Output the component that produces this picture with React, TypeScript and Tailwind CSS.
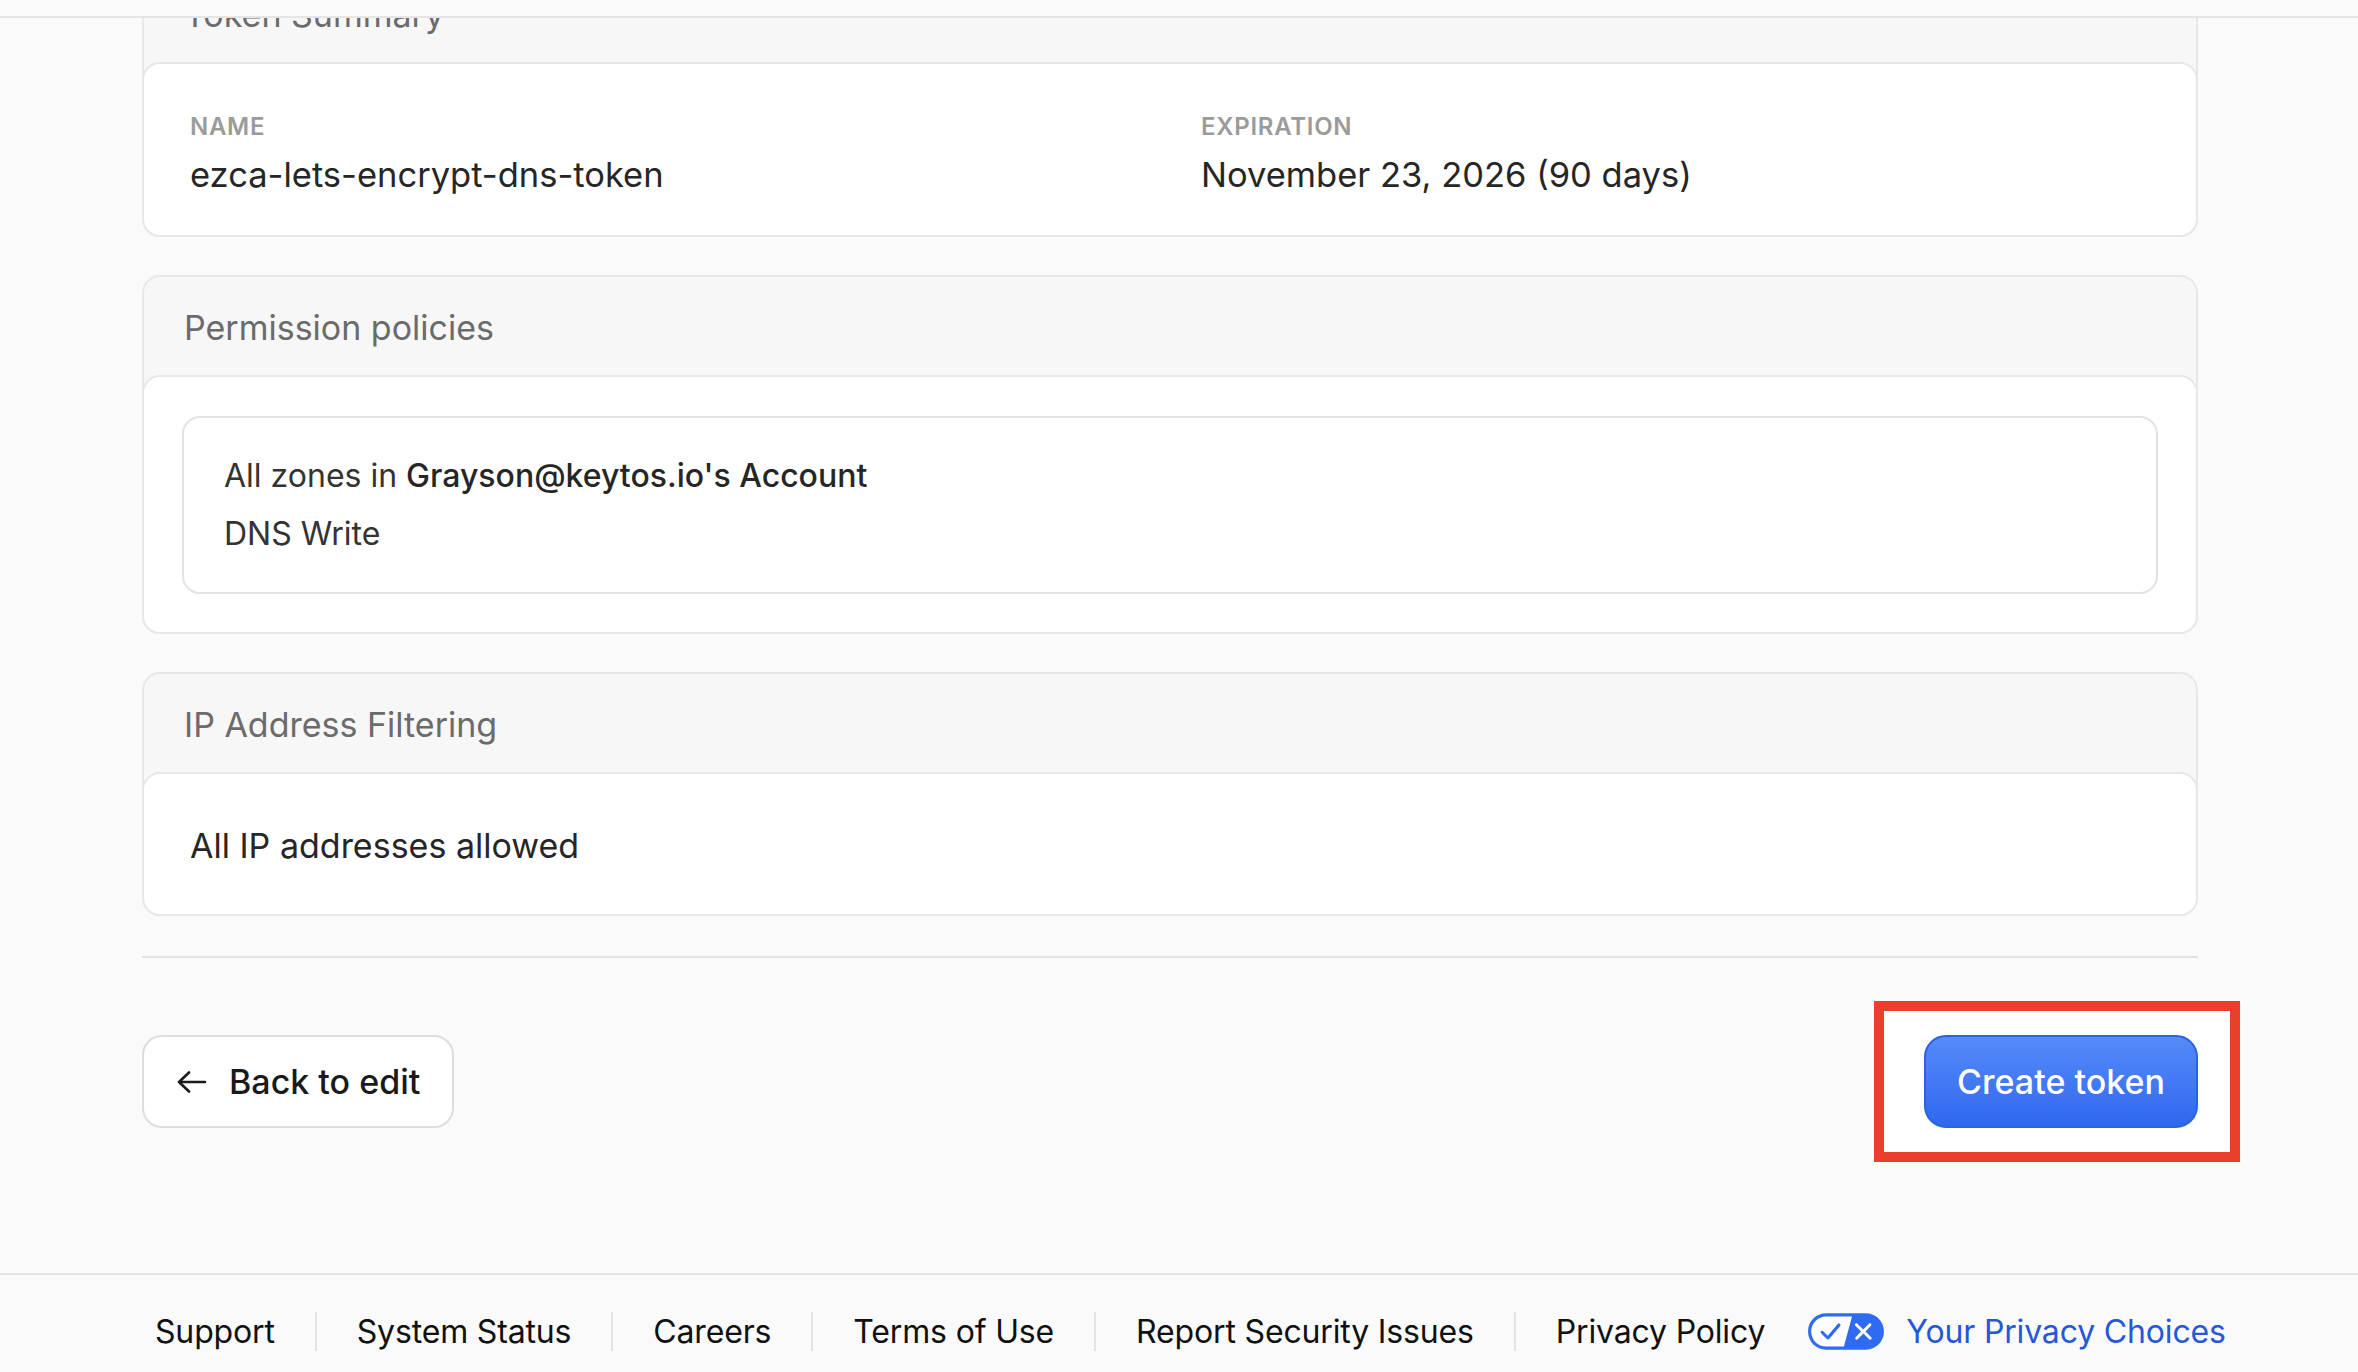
import React from "react";

// Card with a grey title strip and a white body laid over its lower part
function Section({ title, children }: { title: string; children: React.ReactNode }) {
  return (
    <section className="rounded-[18px] border-2 border-[#e8e8e8] bg-[#f7f7f7]">
      <div className="h-[98px] flex items-center pl-[40px] pt-[4px] text-[34px] leading-[44px] text-[#6b6b6b]">
        {title}
      </div>
      <div className="-mx-[2px] -mb-[2px] rounded-[18px] border-2 border-[#e8e8e8] bg-white">
        {children}
      </div>
    </section>
  );
}

function PrivacyIcon() {
  return (
    <svg width="78" height="37" viewBox="0 0 30 14" aria-hidden>
      <path
        fill="#fff"
        fillRule="evenodd"
        d="M7.4 12.8h6.8l3.1-11.6H7.4C4.2 1.2 1.6 3.8 1.6 7s2.6 5.8 5.8 5.8z"
      />
      <path
        fill="#2f6bf0"
        fillRule="evenodd"
        d="M22.6 0H7.4c-3.9 0-7 3.1-7 7s3.1 7 7 7h15.2c3.9 0 7-3.1 7-7s-3.2-7-7-7zm-21 7c0-3.2 2.6-5.8 5.8-5.8h9.9l-3.1 11.6H7.4c-3.2 0-5.8-2.6-5.8-5.8z"
      />
      <path
        fill="#fff"
        d="M24.6 4c.2.2.2.6 0 .8L22.5 7l2.2 2.2c.2.2.2.6 0 .8-.2.2-.6.2-.8 0l-2.2-2.2-2.2 2.2c-.2.2-.6.2-.8 0-.2-.2-.2-.6 0-.8L20.8 7l-2.2-2.2c-.2-.2-.2-.6 0-.8.2-.2.6-.2.8 0l2.2 2.2L23.8 4c.2-.2.6-.2.8 0z"
      />
      <path
        fill="#2f6bf0"
        d="M12.7 4.1c.2.2.3.6.1.8L8.6 9.8c-.1.1-.2.2-.3.2-.2.1-.5.1-.7-.1L5.4 7.7c-.2-.2-.2-.6 0-.8.2-.2.6-.2.8 0L8 8.6l3.8-4.5c.2-.2.6-.2.9 0z"
      />
    </svg>
  );
}

const footerLinks = ["Support", "System Status", "Careers", "Terms of Use", "Report Security Issues", "Privacy Policy"];

export default function App() {
  return (
    <div className="h-[1372px] w-[2358px] overflow-hidden flex flex-col bg-[#fafafa] font-['Inter','Liberation_Sans',sans-serif] text-[#262626]">
      {/* bottom edge of the sticky top bar */}
      <div className="h-[18px] shrink-0 border-b-2 border-[#e5e5e5] bg-[#fafafa] relative z-10" />

      <main className="flex-1 overflow-hidden">
        <div className="-mt-[56px] ml-[142px] w-[2056px]">
          <div className="flex flex-col gap-[38px]">
            <Section title="Token Summary">
              <div className="grid grid-cols-2 gap-x-[62px] pl-[46px] pr-[46px] pt-[47px] pb-[38px]">
                <div className="flex flex-col gap-[10px]">
                  <div className="text-[24px] leading-[32px] font-semibold uppercase tracking-[0.03em] text-[#9b9b9b]">Name</div>
                  <div className="text-[34.5px] leading-[44px]">ezca-lets-encrypt-dns-token</div>
                </div>
                <div className="flex flex-col gap-[10px]">
                  <div className="text-[24px] leading-[32px] font-semibold uppercase tracking-[0.03em] text-[#9b9b9b]">Expiration</div>
                  <div className="text-[34.5px] leading-[44px]">November 23, 2026 (90 days)</div>
                </div>
              </div>
            </Section>

            <Section title="Permission policies">
              <div className="px-[38px] pt-[39px] pb-[38px]">
                <div className="rounded-[18px] border-2 border-[#e3e3e3] bg-white px-[40px] pt-[38px] pb-[38px] flex flex-col gap-[18px] text-[32px] leading-[40px] text-[#333]">
                  <div>
                    All zones in <span className="font-medium text-[#262626]">Grayson@keytos.io's Account</span>
                  </div>
                  <div>DNS Write</div>
                </div>
              </div>
            </Section>

            <Section title="IP Address Filtering">
              <div className="pl-[46px] pt-[50px] pb-[46px] text-[34px] leading-[44px]">All IP addresses allowed</div>
            </Section>
          </div>

          <div className="mt-[40px] h-[2px] bg-[#e3e3e3]" />

          <div className="mt-[77px] flex items-center justify-between">
            <button className="w-[312px] h-[93px] flex items-center gap-[22px] pl-[33px] rounded-[20px] border-2 border-[#dedede] bg-white text-[34px] font-medium text-[#1a1a1a]">
              <svg width="30" height="22" viewBox="0 0 30 22" fill="none" stroke="#1a1a1a" strokeWidth="2.6" strokeLinecap="round" strokeLinejoin="round">
                <path d="M28 11H2M12 1.5L2 11l10 9.5" />
              </svg>
              Back to edit
            </button>

            <div className="relative">
              <div className="absolute -left-[50px] -right-[42px] -top-[34px] -bottom-[34px] border-[10px] border-[#e8402a] bg-white" />
              <button className="relative w-[274px] h-[93px] rounded-[22px] border-2 border-[#2b62df] bg-gradient-to-b from-[#568af8] to-[#2f68ef] text-[34px] font-medium text-white">
                Create token
              </button>
            </div>
          </div>
        </div>
      </main>

      <footer className="h-[99px] shrink-0 border-t-2 border-[#e3e3e3] bg-[#fafafa] pl-[155px] pt-[16px] flex items-center gap-[40px] text-[32px] tracking-[-0.005em] text-[#111]">
        {footerLinks.map((l, i) => (
          <React.Fragment key={l}>
            {i > 0 && <div className="w-[2px] h-[39px] bg-[#e3e3e3]" />}
            <a>{l}</a>
          </React.Fragment>
        ))}
        <a className="ml-[2px] flex items-center gap-[21px] text-[#2657d9]">
          <PrivacyIcon />
          Your Privacy Choices
        </a>
      </footer>
    </div>
  );
}
